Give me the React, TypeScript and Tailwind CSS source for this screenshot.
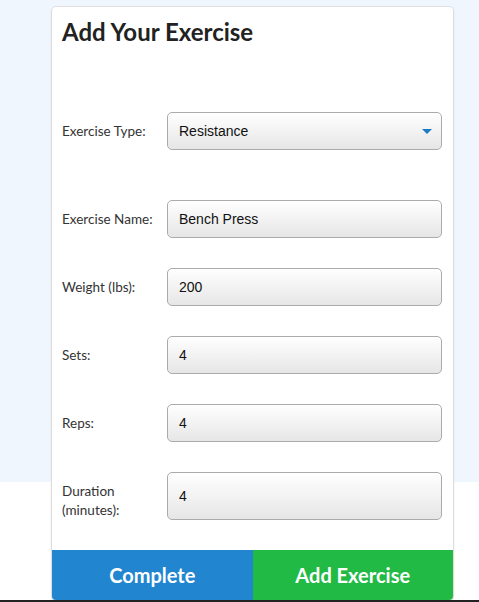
import React from 'react';

const fields = [
  { label: 'Exercise Name:', value: 'Bench Press' },
  { label: 'Weight (lbs):', value: '200' },
  { label: 'Sets:', value: '4' },
  { label: 'Reps:', value: '4' },
];

const inputCls =
  "flex items-center w-[275px] shrink-0 rounded-[5px] border border-[#ababab] bg-[linear-gradient(#ffffff,#e6e6e6)] px-[11px] font-['Liberation_Sans',Arial,sans-serif] text-[14px] text-[#111]";

function Row({ label, value, tall }: { label: string; value: string; tall?: boolean }) {
  return (
    <div className="flex items-center">
      <div className={`w-[105px] shrink-0 text-[13.5px] leading-[19px] text-[#333] ${tall ? 'translate-y-[5px]' : ''}`}>{label}</div>
      <div className={`${inputCls} ${tall ? 'h-[48px]' : 'h-[38px]'}`}>{value}</div>
    </div>
  );
}

export default function App() {
  return (
    <div className="min-h-[602px] bg-[linear-gradient(to_bottom,#f0f6fe_0px,#f0f6fe_482px,#ffffff_482px)] font-['Lato',sans-serif]">
      <div className="ml-[52px] pt-[7px]">
        <div className="w-[401px] overflow-hidden rounded-[4px] bg-white shadow-[0_1px_3px_0_#d4d4d5,0_0_0_1px_#e2e2e4]">
          <div className="pl-[10px] pr-[11px] pt-[10px]">
            <h1 className="text-[24px] font-bold leading-[30px] text-[#222]">Add Your Exercise</h1>

            <div className="mt-[65px] flex items-center">
              <div className="w-[105px] shrink-0 text-[13.5px] leading-[19px] text-[#333]">Exercise Type:</div>
              <div className={`${inputCls} h-[38px] justify-between pr-[9px]`}>
                <span>Resistance</span>
                <svg width="10" height="5" viewBox="0 0 10 5">
                  <path d="M0 0 L10 0 L5 5 Z" fill="#1a7bc3" />
                </svg>
              </div>
            </div>

            <div className="mt-[50px] flex flex-col gap-[30px]">
              {fields.map((f) => (
                <Row key={f.label} label={f.label} value={f.value} />
              ))}
              <Row label="Duration (minutes):" value="4" tall />
            </div>
          </div>

          <div className="mt-[30px] flex h-[50px] text-[20px] font-bold text-white">
            <button className="flex flex-1 items-center justify-center bg-[#2185d0]">Complete</button>
            <button className="flex flex-1 items-center justify-center bg-[#21ba45]">Add Exercise</button>
          </div>
        </div>
      </div>
      <div className="h-[2px] bg-[#222]" />
    </div>
  );
}
